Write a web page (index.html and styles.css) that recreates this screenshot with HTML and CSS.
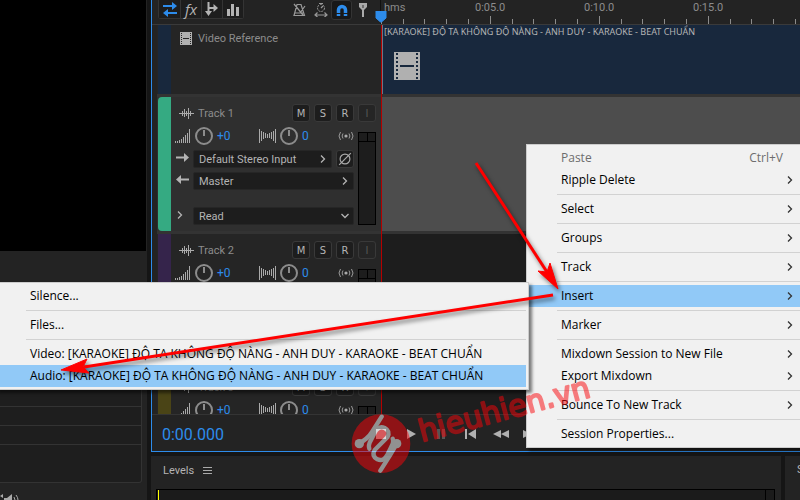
FILE: index.html
```html
<!DOCTYPE html>
<html lang="vi">
<head>
  <meta charset="UTF-8" />
  <title>Multitrack Session</title>
  <link rel="stylesheet" href="styles.css">
</head>

<body>
  <!-- Shared icons -->
  <svg class="sprite" aria-hidden="true">
    <symbol id="wave" viewBox="0 0 15 12">
      <path d="M0 6.5h15M3.5 4v5M5.5 2v8M7.5 4v5M9.5 1v11M11.5 4v5" stroke="#aaa" fill="none" />
    </symbol>
    <symbol id="volume" viewBox="0 0 16 14">
      <path d="M.5 12v2M2.5 12v2M4.5 11v3M6.5 10v4M8.5 8v6M10.5 6v8M12.5 4v10M14.5 0v14" stroke="#aaa" fill="none" />
    </symbol>
    <symbol id="pan" viewBox="0 0 17 14">
      <path d="M.5 0v14M2.5 2v10M4.5 3v7M6.5 4v5M8.5 5v4M10.5 4v5M12.5 3v7M14.5 2v10M16.5 0v14" stroke="#aaa" fill="none" />
    </symbol>
    <symbol id="knob" viewBox="0 0 18 18">
      <circle cx="9" cy="9" r="8" stroke="#8c8c8c" stroke-width="2" fill="none" />
      <path d="M9 3v6" stroke="#8c8c8c" stroke-width="2" />
    </symbol>
    <symbol id="monitor" viewBox="0 0 16 10">
      <circle cx="8" cy="5" r="1.6" fill="#aaa" />
      <path d="M5 2.5q-1.800 2.500 0 5M11 2.500q1.800 2.500 0 5M2.500 1q-3 4 0 8M13.500 1q3 4 0 8" stroke="#999" fill="none" />
    </symbol>
    <symbol id="to" viewBox="0 0 13 9">
      <path d="M0 4.500h10" stroke="#b4b4b4" stroke-width="2" />
      <path d="M8 0l5 4.500l-5 4.500z" fill="#b4b4b4" />
    </symbol>
    <symbol id="from" viewBox="0 0 13 9">
      <path d="M3 4.500h10" stroke="#b4b4b4" stroke-width="2" />
      <path d="M5 0l-5 4.500l5 4.500z" fill="#b4b4b4" />
    </symbol>
    <symbol id="chevron" viewBox="0 0 8 8">
      <path d="M2 .5l3.500 3.500l-3.500 3.500" stroke="currentColor" stroke-width="1.300" fill="none" />
    </symbol>
    <symbol id="chevron-down" viewBox="0 0 8 8">
      <path d="M.5 2l3.500 3.500l3.500-3.500" stroke="currentColor" stroke-width="1.300" fill="none" />
    </symbol>
    <symbol id="phase" viewBox="0 0 12 12">
      <circle cx="6" cy="6" r="4.200" stroke="#aaa" fill="none" />
      <path d="M1 11L11 1" stroke="#aaa" />
    </symbol>
    <symbol id="film" viewBox="0 0 26 28">
      <path d="M0 0h26v28H0z" fill="#b0b0b0" />
      <path d="M3 1v27M23 1v27" stroke="#18283d" stroke-width="2" stroke-dasharray="2" />
      <path d="M6 14h14" stroke="#18283d" stroke-width="2" />
    </symbol>
    <symbol id="film-small" viewBox="0 0 12 13">
      <path d="M0 0h12v13H0z" fill="#b0b0b0" />
      <path d="M1.500 1v12M10.500 1v12" stroke="#252525" stroke-dasharray="1" />
      <path d="M3 6.500h6" stroke="#252525" />
    </symbol>
    <symbol id="ticks" viewBox="0 0 109 8">
      <path d="M.5 0v8M22.500 3v5M43.500 3v5M65.500 3v5M87.500 3v5" stroke="#8c8c8c" fill="none" />
    </symbol>
  </svg>

  <div class="app">
    <!-- Left column: video preview and file list -->
    <aside class="side">
      <div class="preview"></div>
      <div class="file-list">
        <div class="file-row"></div>
        <div class="file-row"></div>
        <div class="file-row"></div>
        <div class="file-row"></div>
      </div>
      <svg class="speaker" width="20" height="14" viewBox="0 0 20 14">
        <path d="M0 3l3-2v4zM4 5h3l5-4v12l-5-4H4z" fill="#aaa" />
        <path d="M14 4q2 3 0 6M16 2q4 5 0 10" stroke="#aaa" fill="none" />
      </svg>
    </aside>

    <!-- Multitrack session -->
    <main class="session">
      <div class="session-top">
        <div class="toolbar">
          <div class="tool-group">
            <button class="tool" aria-label="Routing">
              <svg width="16" height="16" viewBox="0 0 16 16"><path d="M1 5h11M4 12h11" stroke="#2d8ceb" stroke-width="2" /><path d="M10 1l5 4l-5 4zM6 8l-5 4l5 4z" fill="#2d8ceb" /></svg>
            </button>
            <button class="tool fx">fx</button>
            <button class="tool" aria-label="Sends">
              <svg width="14" height="16" viewBox="0 0 14 16"><path d="M3.500 1v11M3.500 7H10" stroke="#b4b4b4" stroke-width="2" fill="none" /><path d="M0 10h7l-3.500 5zM8.500 3l4.500 4l-4.500 4z" fill="#b4b4b4" /></svg>
            </button>
            <button class="tool" aria-label="Meters">
              <svg width="12" height="13" viewBox="0 0 12 13"><path d="M0 6h3v7H0zM4 1h3v12H4zM9 4h3v9H9z" fill="#b4b4b4" /></svg>
            </button>
          </div>
          <div class="tool-options">
            <button class="option" aria-label="Metronome">
              <svg width="13" height="14" viewBox="0 0 13 14"><path d="M4 1.500h4L11.500 12.500H1zM2 10h8M1 1l9 11M12 3L7 10" stroke="#999" stroke-width="1.200" fill="none" /></svg>
            </button>
            <button class="option" aria-label="Time">
              <svg width="14" height="14" viewBox="0 0 14 14"><circle cx="7" cy="5" r="3.500" stroke="#999" stroke-dasharray="2 1" fill="none" /><path d="M7 5l2-2M5 .500h4M1 12h12M3.500 9.500L1 12l2.500 2M10.500 9.500L13 12l-2.500 2" stroke="#999" stroke-width="1.200" fill="none" /></svg>
            </button>
            <button class="option active" aria-label="Snap">
              <svg width="12" height="13" viewBox="0 0 12 13"><path d="M2.500 12V6a3.500 3.500 0 0 1 7 0v6" stroke="#2d8ceb" stroke-width="3.500" fill="none" /><path d="M0 9.500h5M7 9.500h5" stroke="#1b1b1b" /></svg>
            </button>
            <button class="option" aria-label="Add marker">
              <svg width="8" height="14" viewBox="0 0 8 14"><path d="M0 0h8v4L5 7v7H3V7L0 4z" fill="#aaa" /><path d="M4 2v3" stroke="#333" /></svg>
            </button>
          </div>
        </div>
        <div class="ruler">
          <div class="ruler-unit"><span>hms</span><svg class="ticks"><use href="#ticks" /></svg></div>
          <div class="ruler-unit"><span>0:05.0</span><svg class="ticks"><use href="#ticks" /></svg></div>
          <div class="ruler-unit"><span>0:10.0</span><svg class="ticks"><use href="#ticks" /></svg></div>
          <div class="ruler-unit"><span>0:15.0</span><svg class="ticks"><use href="#ticks" /></svg></div>
        </div>
      </div>

      <div class="tracks">
        <section class="track video">
          <div class="track-head">
            <div class="strip"></div>
            <div class="video-title"><svg width="12" height="13"><use href="#film-small" /></svg>Video Reference</div>
          </div>
          <div class="lane clip">
            <div class="clip-name">[KARAOKE] ĐỘ TA KHÔNG ĐỘ NÀNG - ANH DUY - KARAOKE - BEAT CHUẨN</div>
            <svg class="clip-icon" width="26" height="28"><use href="#film" /></svg>
          </div>
        </section>

        <section class="track selected">
          <div class="track-head">
            <div class="strip green"></div>
            <div class="track-body">
              <div class="track-title">
                <svg width="15" height="12"><use href="#wave" /></svg><span>Track 1</span>
                <div class="track-buttons"><button>M</button><button>S</button><button>R</button><button disabled>I</button></div>
              </div>
              <div class="track-lower">
                <div class="controls">
                  <div class="knobs">
                    <svg width="16" height="14"><use href="#volume" /></svg><svg width="18" height="18"><use href="#knob" /></svg><span class="gain">+0</span>
                    <svg width="17" height="14"><use href="#pan" /></svg><svg width="18" height="18"><use href="#knob" /></svg><span>0</span>
                    <svg class="monitor" width="16" height="10"><use href="#monitor" /></svg>
                  </div>
                  <div class="routing">
                    <svg width="13" height="9"><use href="#to" /></svg>
                    <div class="field"><select aria-label="Input"><option>Default Stereo Input</option></select><svg width="8" height="8"><use href="#chevron" /></svg></div>
                    <button class="phase" aria-label="Phase"><svg width="14" height="14"><use href="#phase" /></svg></button>
                  </div>
                  <div class="routing">
                    <svg width="13" height="9"><use href="#from" /></svg>
                    <div class="field"><select aria-label="Output"><option>Master</option></select><svg width="8" height="8"><use href="#chevron" /></svg></div>
                  </div>
                  <div class="routing automation">
                    <svg width="8" height="8"><use href="#chevron" /></svg>
                    <div class="field"><select aria-label="Automation"><option>Read</option></select><svg width="8" height="8"><use href="#chevron-down" /></svg></div>
                  </div>
                </div>
                <div class="meter"></div>
              </div>
            </div>
          </div>
          <div class="lane"></div>
        </section>

        <section class="track">
          <div class="track-head">
            <div class="strip purple"></div>
            <div class="track-body">
              <div class="track-title">
                <svg width="15" height="12"><use href="#wave" /></svg><span>Track 2</span>
                <div class="track-buttons"><button>M</button><button>S</button><button>R</button><button disabled>I</button></div>
              </div>
              <div class="track-lower">
                <div class="controls">
                  <div class="knobs">
                    <svg width="16" height="14"><use href="#volume" /></svg><svg width="18" height="18"><use href="#knob" /></svg><span class="gain">+0</span>
                    <svg width="17" height="14"><use href="#pan" /></svg><svg width="18" height="18"><use href="#knob" /></svg><span>0</span>
                    <svg class="monitor" width="16" height="10"><use href="#monitor" /></svg>
                  </div>
                </div>
                <div class="meter"></div>
              </div>
            </div>
          </div>
          <div class="lane"></div>
        </section>

        <section class="track">
          <div class="track-head">
            <div class="strip olive"></div>
            <div class="track-body">
              <div class="track-title">
                <svg width="15" height="12"><use href="#wave" /></svg><span>Track 3</span>
                <div class="track-buttons"><button>M</button><button>S</button><button>R</button><button disabled>I</button></div>
              </div>
              <div class="track-lower">
                <div class="controls">
                  <div class="knobs">
                    <svg width="16" height="14"><use href="#volume" /></svg><svg width="18" height="18"><use href="#knob" /></svg><span class="gain">+0</span>
                    <svg width="17" height="14"><use href="#pan" /></svg><svg width="18" height="18"><use href="#knob" /></svg><span>0</span>
                    <svg class="monitor" width="16" height="10"><use href="#monitor" /></svg>
                  </div>
                </div>
                <div class="meter"></div>
              </div>
            </div>
          </div>
          <div class="lane"></div>
        </section>

        <div class="playhead"></div>
      </div>

      <svg class="playhead-marker" width="12" height="12" viewBox="0 0 12 12"><path d="M1 0h10v7l-4.500 4h-1L1 7z" fill="#2d8ceb" stroke="#2d8ceb" /></svg>

      <div class="transport">
        <div class="timecode">0:00.000</div>
        <div class="transport-buttons">
          <button aria-label="Stop"><svg width="16" height="10"><path d="M3 0h10v10H3z" /></svg></button>
          <button aria-label="Play"><svg width="16" height="10"><path d="M4 0l9 5l-9 5z" /></svg></button>
          <button aria-label="Pause" disabled><svg width="16" height="10"><path d="M4 0h3v10H4zM9 0h3v10H9z" /></svg></button>
          <button aria-label="Previous"><svg width="16" height="10"><path d="M2 0h2v10H2zM13 0v10L5 5z" /></svg></button>
          <button aria-label="Rewind"><svg width="16" height="10"><path d="M8 1v8L0 5zM16 1v8L8 5z" /></svg></button>
          <button aria-label="Forward"><svg width="16" height="10"><path d="M0 1v8l8-4zM8 1v8l8-4z" /></svg></button>
        </div>
      </div>
    </main>

    <!-- Bottom panels -->
    <section class="levels">
      <div class="panel-title">Levels
        <svg width="9" height="9"><path d="M0 1.500h9M0 4.500h9M0 7.500h9" stroke="#aaa" /></svg>
      </div>
      <div class="level-meter"></div>
    </section>
    <section class="selection">S</section>
  </div>

  <!-- Context menu -->
  <div class="menu context-menu">
    <button disabled>Paste<kbd>Ctrl+V</kbd></button>
    <button>Ripple Delete<svg><use href="#chevron" /></svg></button>
    <hr>
    <button>Select<svg><use href="#chevron" /></svg></button>
    <hr>
    <button>Groups<svg><use href="#chevron" /></svg></button>
    <hr>
    <button>Track<svg><use href="#chevron" /></svg></button>
    <hr>
    <button class="current">Insert<svg><use href="#chevron" /></svg></button>
    <hr>
    <button>Marker<svg><use href="#chevron" /></svg></button>
    <hr>
    <button>Mixdown Session to New File<svg><use href="#chevron" /></svg></button>
    <button>Export Mixdown<svg><use href="#chevron" /></svg></button>
    <hr>
    <button>Bounce To New Track<svg><use href="#chevron" /></svg></button>
    <hr>
    <button>Session Properties...</button>
  </div>

  <!-- Insert submenu -->
  <div class="menu submenu">
    <button>Silence...</button>
    <hr>
    <button>Files...</button>
    <hr>
    <button>Video: [KARAOKE] ĐỘ TA KHÔNG ĐỘ NÀNG - ANH DUY - KARAOKE - BEAT CHUẨN</button>
    <button class="current">Audio: [KARAOKE] ĐỘ TA KHÔNG ĐỘ NÀNG - ANH DUY - KARAOKE - BEAT CHUẨN</button>
  </div>

  <!-- Watermark and pointer arrows -->
  <svg class="overlay" width="800" height="500" viewBox="0 0 800 500">
    <svg x="346" y="408" width="72" height="72" viewBox="0 0 216 216" opacity="0.5">
      <circle cx="105" cy="107" r="88" fill="#fa050a" />
      <g stroke="#fff" stroke-width="13" fill="none" stroke-linejoin="round" stroke-linecap="round">
        <path d="M107 26L78 72Q66 92 38 107" />
        <path d="M103 188L132 142Q144 122 152 107" />
        <path d="M70 122Q66 112 74 98L86 74Q98 52 116 60Q134 70 124 88L86 126Q76 144 94 154Q112 162 124 140L136 116Q144 102 140 92" />
      </g>
      <circle cx="40" cy="107" r="14" fill="#fff" />
      <circle cx="152" cy="107" r="14" fill="#fff" />
    </svg>
    <text class="watermark" transform="translate(422 442) rotate(-15)">hieuhien.vn</text>
    <g class="arrows">
      <path d="M476 163L547 272" />
      <path d="M553 295L84 367" />
      <path class="tip" d="M558 289L538 271L547 272L550 263Z" />
      <path class="tip" d="M61 370L87 359L83 367L89 373Z" />
    </g>
  </svg>
</body>
</html>
```

FILE: styles.css
```css
* {
  margin: 0;
  padding: 0;
  box-sizing: border-box;
}

body {
  position: relative;
  height: 100vh;
  overflow: hidden;
  background-color: #151515;
  font-family: Roboto, "Noto Sans", sans-serif;
  font-size: 11px;
  color: #b4b4b4;
}

button,
select {
  font: inherit;
  color: inherit;
  border: none;
  background: none;
}

svg {
  display: block;
  flex: none;
}

.sprite {
  position: absolute;
  width: 0;
  height: 0;
}

.app {
  display: grid;
  grid-template-columns: 147px 1fr 15px;
  grid-template-rows: 1fr 44px;
  gap: 4px;
  height: 100vh;
}

/* Left column */
.side {
  grid-row: 1 / 3;
  display: flex;
  flex-direction: column;
  background-color: #232323;
  overflow: hidden;
}

.preview {
  flex: none;
  height: 251px;
  margin-right: 1px;
  background-color: #000;
}

.file-list {
  flex: 1;
  display: flex;
  flex-direction: column;
  margin: 40px 5px 0 0;
  background-color: #1e1e1e;
  border: 1px solid #333;
  border-left: none;
  border-radius: 0 0 3px 0;
}

.file-row {
  height: 19px;
  border-bottom: 1px solid #333;
}

.file-row:first-child {
  flex: 1;
}

.file-row:last-child {
  height: 37px;
  border-bottom: none;
}

.speaker {
  margin-top: 10px;
  margin-bottom: -7px;
}

/* Session */
.session {
  grid-column: 2 / 4;
  position: relative;
  display: flex;
  flex-direction: column;
  min-width: 0;
  min-height: 0;
  border-left: 1px solid #2d8ceb;
  border-bottom: 1px solid #2d8ceb;
  background-color: #232323;
}

.session-top {
  display: flex;
  height: 25px;
  border-bottom: 1px solid #3a3a3a;
}

.toolbar {
  flex: none;
  display: flex;
  align-items: flex-start;
  justify-content: space-between;
  width: 228px;
  padding: 0 7px 0 6px;
}

.tool-group {
  display: flex;
  border: 1px solid #343434;
  border-top: none;
  border-radius: 0 0 3px 3px;
}

.tool {
  display: flex;
  align-items: center;
  justify-content: center;
  width: 21px;
  height: 18px;
  background-color: #1d1d1d;
}

.tool + .tool {
  border-left: 1px solid #343434;
}

.fx {
  font-family: "Open Sans", sans-serif;
  font-style: italic;
  font-size: 15px;
  line-height: 16px;
}

.tool-options {
  display: flex;
}

.option {
  display: flex;
  align-items: center;
  justify-content: center;
  width: 21px;
  height: 20px;
}

.option.active {
  background-color: #181818;
  border: 1px solid #343434;
  border-radius: 3px;
}

.ruler {
  flex: 1;
  display: flex;
  overflow: hidden;
  border-left: 1px solid #111;
}

.ruler-unit {
  flex: none;
  width: 109px;
  font-size: 11px;
  line-height: 16px;
  color: #8c8c8c;
}

.ruler-unit span {
  display: inline-block;
  vertical-align: top;
}

.ruler-unit:first-child span {
  margin-left: 3px;
}

.ruler-unit + .ruler-unit span {
  margin-left: -15px;
}

.ticks {
  width: 109px;
  height: 8px;
}

/* Tracks */
.tracks {
  flex: 1;
  position: relative;
  display: flex;
  flex-direction: column;
  gap: 3px;
  min-height: 0;
  margin-left: 5px;
  overflow: hidden;
  background-color: #333;
}

.track {
  flex: none;
  display: flex;
  height: 134px;
}

.track.video {
  height: 69px;
}

.track-head {
  flex: none;
  display: flex;
  width: 224px;
  padding-left: 1px;
  background-color: #252525;
}

.selected .track-head {
  background-color: #2f2f2f;
}

.lane {
  flex: 1;
  background-color: #1d1d1d;
}

.selected .lane {
  background-color: #4d4d4d;
}

.strip {
  width: 13px;
  background-color: #18283d;
}

.strip.green {
  background-color: #35aa82;
  border-radius: 4px 0 0 4px;
}

.strip.purple {
  background-color: #35244b;
}

.strip.olive {
  background-color: #4a4416;
}

.video-title {
  display: flex;
  align-items: center;
  gap: 6px;
  height: 27px;
  padding-left: 9px;
  color: #8c8c8c;
}

.lane.clip {
  min-width: 0;
  margin-left: 1px;
  border-left: 1px solid #6b7684;
  background-color: #18283d;
}

.clip-name {
  height: 27px;
  padding-left: 1px;
  font-family: "Noto Sans", sans-serif;
  font-size: 9px;
  line-height: 13px;
  white-space: nowrap;
}

.clip-icon {
  margin-left: 11px;
}

.track-body {
  flex: 1;
  padding: 7px 5px 6px 4px;
}

.track-title {
  display: flex;
  align-items: center;
  gap: 4px;
  height: 18px;
  padding-left: 4px;
  color: #8c8c8c;
}

.track-buttons {
  display: flex;
  gap: 4px;
  margin-left: auto;
}

.track-buttons button,
.phase {
  display: flex;
  align-items: center;
  justify-content: center;
  width: 18px;
  height: 18px;
  border-radius: 3px;
  border: 1px solid #393939;
  background-color: #1d1d1d;
  font-family: "DejaVu Sans", sans-serif;
  font-size: 10px;
  color: #b4b4b4;
}

.track-buttons button:disabled {
  background-color: #252525;
  color: #555;
}

.track-lower {
  display: flex;
  gap: 4px;
}

.controls {
  flex: 1;
}

.knobs {
  display: flex;
  align-items: center;
  gap: 4px;
  height: 28px;
  font-size: 12px;
  color: #2d8ceb;
}

.gain {
  width: 38px;
}

.monitor {
  margin-left: auto;
}

.routing {
  display: flex;
  align-items: center;
  gap: 4px;
  height: 18px;
  margin-bottom: 4px;
  padding-left: 1px;
}

.routing > svg {
  margin-top: -3px;
}

.automation {
  margin-top: 17px;
}

.automation > svg {
  margin-right: 5px;
}

.field {
  flex: 1;
  display: flex;
  align-items: center;
  height: 18px;
  padding-right: 4px;
  border: 1px solid #262626;
  border-radius: 2px;
  background-color: #1d1d1d;
}

.field select {
  flex: 1;
  padding-left: 5px;
  appearance: none;
}

.meter {
  width: 18px;
  height: 93px;
  margin-top: 10px;
  border: 1px solid #000;
  background:
    linear-gradient(#000, #000) 0 8px / 100% 1px no-repeat,
    linear-gradient(#000, #000) 8px 0 / 1px 8px no-repeat,
    #1d1d1d;
}

.playhead {
  position: absolute;
  top: 0;
  bottom: 0;
  left: 224px;
  width: 1px;
  background-color: #b40000;
}

.playhead-marker {
  position: absolute;
  top: 11px;
  left: 223px;
}

/* Transport */
.transport {
  display: flex;
  align-items: center;
  height: 37px;
  padding-top: 2px;
  border-top: 1px solid #343434;
}

.timecode {
  width: 214px;
  padding-left: 10px;
  font-size: 16px;
  color: #2d8ceb;
}

.transport-buttons {
  display: flex;
}

.transport-buttons button {
  display: flex;
  justify-content: center;
  width: 30px;
}

.transport-buttons svg {
  fill: #b0b0b0;
}

.transport-buttons button:disabled svg {
  fill: #555;
}

/* Bottom panels */
.levels {
  padding: 0 6px 0 5px;
  background-color: #232323;
}

.panel-title {
  display: flex;
  align-items: center;
  gap: 9px;
  height: 33px;
  padding: 0 7px 4px;
}

.level-meter {
  height: 11px;
  border: 1px solid #000;
  border-bottom: none;
  background:
    linear-gradient(#ff0, #ff0) 1px 0 / 1px 100% no-repeat,
    linear-gradient(#000, #000) calc(100% - 8px) 0 / 1px 100% no-repeat,
    #1b1b1b;
}

.selection {
  padding-left: 12px;
  line-height: 28px;
  overflow: hidden;
  white-space: nowrap;
  background-color: #232323;
}

/* Menus */
.menu {
  position: absolute;
  padding: 2px;
  border: 1px solid #ccc;
  background-color: #f1f1f1;
  box-shadow: 3px 3px 3px rgba(0, 0, 0, 0.5);
  font-family: "Open Sans", "Noto Sans", sans-serif;
  font-size: 12px;
  color: #000;
}

.menu button {
  display: flex;
  align-items: center;
  justify-content: space-between;
  width: 100%;
  height: 22px;
  padding: 0 19px 1px 32px;
  text-align: left;
  white-space: nowrap;
}

.menu button:disabled {
  color: #6d6d6d;
}

.menu .current {
  background-color: #91c9f7;
}

.menu kbd {
  margin-right: 11px;
  font: inherit;
}

.menu svg {
  width: 8px;
  height: 8px;
  color: #333;
}

.menu hr {
  height: 1px;
  margin: 3px 0 3px 28px;
  border: none;
  background-color: #d2d2d2;
}

.context-menu {
  top: 144px;
  left: 526px;
  width: 290px;
}

.submenu {
  top: 282px;
  left: -5px;
  width: 534px;
}

/* Annotations */
.overlay {
  position: absolute;
  top: 0;
  left: 0;
  pointer-events: none;
}

.watermark {
  font-family: "DejaVu Sans", sans-serif;
  font-size: 30px;
  fill: #fa050a;
  stroke: #fa050a;
  stroke-width: 2px;
  stroke-linejoin: round;
  opacity: 0.5;
}

.arrows {
  fill: none;
  stroke: #f00;
  stroke-width: 3px;
  filter: drop-shadow(2px 3px 2px rgba(0, 0, 0, 0.5));
}

.arrows .tip {
  fill: #f00;
  stroke-width: 1px;
}
```
